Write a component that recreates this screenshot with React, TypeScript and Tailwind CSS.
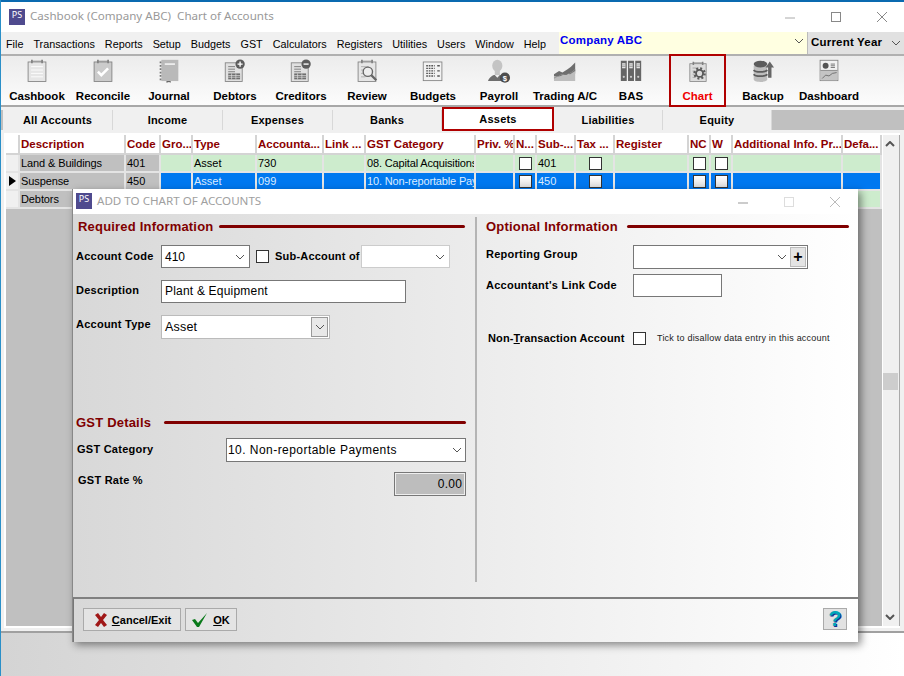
import type { ReactNode } from "react";

const MENU = ["File", "Transactions", "Reports", "Setup", "Budgets", "GST", "Calculators", "Registers", "Utilities", "Users", "Window", "Help"];
const TABS = [
  { name: "All Accounts", width: "w-[110px]" },
  { name: "Income", width: "w-[110px]" },
  { name: "Expenses", width: "w-[110px]" },
  { name: "Banks", width: "w-[109px]" },
  { name: "Assets", width: "w-[112px]" },
  { name: "Liabilities", width: "w-[109px]" },
  { name: "Equity", width: "w-[109px]" },
];
const HEADERS = ["Description", "Code", "Gro...", "Type", "Accounta...", "Link ...", "GST Category", "Priv. %", "N...", "Sub-...", "Tax ...", "Register", "NC", "W", "Additional Info. Pr...", "Defa..."];

const ROWS = [
  { desc: "Land & Buildings", code: "401", type: "Asset", acct: "730", gst: "08. Capital Acquisitions", sub: "401", selected: false },
  { desc: "Suspense", code: "450", type: "Asset", acct: "099", gst: "10. Non-reportable Payments", sub: "450", selected: true },
  { desc: "Debtors", code: "", type: "", acct: "", gst: "", sub: "", selected: false },
];

function Clipboard({ fill = "#e6e6e6", children }: { fill?: string; children?: ReactNode }) {
  return (
    <svg width="28" height="28" viewBox="0 0 28 28">
      <rect x="3.5" y="3.5" width="21" height="23" fill={fill} stroke="#808080" />
      <path d="M7 1h2v4H7zM19 1h2v4h-2zM9 2h10v1H9z" fill="#808080" />
      {children}
    </svg>
  );
}

function DocTable({ sign }: { sign: "plus" | "minus" }) {
  return (
    <svg width="28" height="28" viewBox="0 0 28 28">
      <rect x="2.5" y="4.5" width="20" height="22" fill="#e0e0e0" stroke="#808080" />
      <path d="M6 9h8M6 12h8M6 15h8" stroke="#707070" />
      <rect x="6" y="17" width="14" height="7" fill="#6e6e6e" />
      <path d="M6 19.5h14M6 21.5h14M10 17v7M15 17v7" stroke="#e0e0e0" strokeWidth="0.8" />
      <circle cx="20" cy="6" r="5.5" fill="#5c5c5c" />
      {sign === "plus" ? <path d="M17 6h6M20 3v6" stroke="#fff" strokeWidth="1.6" /> : <path d="M17 6h6" stroke="#fff" strokeWidth="1.6" />}
    </svg>
  );
}

function ToolIcon({ name }: { name: string }) {
  if (name === "Cashbook") {
    return (
      <Clipboard>
        <path d="M7 9h14M7 13h14M7 17h14M7 21h14" stroke="#fff" />
      </Clipboard>
    );
  }
  if (name === "Reconcile") {
    return (
      <Clipboard fill="#cbcbcb">
        <path d="M8 15l4 4 8-8" fill="none" stroke="#fff" strokeWidth="3" />
      </Clipboard>
    );
  }
  if (name === "Journal") {
    return (
      <svg width="28" height="28" viewBox="0 0 28 28">
        <rect x="5" y="1" width="20" height="25" fill="#b9b9b9" />
        <rect x="9" y="5" width="12" height="2" fill="#f0f0f0" />
        <path d="M4 3v22" stroke="#777" strokeDasharray="2 2" strokeWidth="2" />
        <path d="M11 26h5v2l-2-1-3 1z" fill="#666" />
      </svg>
    );
  }
  if (name === "Debtors") return <DocTable sign="plus" />;
  if (name === "Creditors") return <DocTable sign="minus" />;
  if (name === "Review") {
    return (
      <Clipboard>
        <path d="M7 9h9M7 13h4M7 17h3M7 21h5" stroke="#aaa" />
        <circle cx="15" cy="15" r="5.5" fill="#eee" stroke="#666" strokeWidth="1.6" />
        <path d="M19 19l6 6" stroke="#666" strokeWidth="2.6" />
      </Clipboard>
    );
  }
  if (name === "Budgets") {
    return (
      <svg width="28" height="28" viewBox="0 0 28 28">
        <rect x="2.5" y="3.5" width="22" height="22" fill="#f2f2f2" stroke="#808080" />
        <path d="M6 8h10M6 11h10M6 14h10M6 17h10M6 20h10" stroke="#555" strokeWidth="1.6" strokeDasharray="2 1" />
        <path d="M19 8h3M19 14h3M19 20h3" stroke="#555" strokeWidth="1.6" />
      </svg>
    );
  }
  if (name === "Payroll") {
    return (
      <svg width="28" height="28" viewBox="0 0 28 28">
        <ellipse cx="12" cy="8" rx="6" ry="7" fill="#c4c4c4" />
        <rect x="9" y="13" width="6" height="6" fill="#c4c4c4" />
        <path d="M1 26c2-5 6-7 8-7l3 3 3-3c2 0 5 1 6 3v4z" fill="#6e6e6e" />
        <circle cx="21" cy="22" r="6" fill="#4d4d4d" />
        <text x="21" y="25.5" textAnchor="middle" fontSize="9" fontWeight="700" fill="#fff" fontFamily="Liberation Sans, sans-serif">$</text>
      </svg>
    );
  }
  if (name === "Trading A/C") {
    return (
      <svg width="28" height="28" viewBox="0 0 28 28">
        <path d="M1 18l6-4 4 2 6-4 4-3 5-5v13l-6 3-5-1-6 3-4-1-4 2z" fill="#6e6e6e" />
        <path d="M1 20l4 1 5-3 5 1 6-3 5-4v14H1z" fill="#bdbdbd" />
        <path d="M1 22l4-1 5-3 5 1 6-3 5-4v2l-6 4-5-1-6 3-4 1-4 2z" fill="#777" />
      </svg>
    );
  }
  if (name === "BAS") {
    return (
      <svg width="28" height="28" viewBox="0 0 28 28">
        <path d="M2 2h7v24H2zM10.5 2h7v24h-7zM19 2h7v24h-7z" fill="#666" />
        <path d="M3.5 5h4v6h-4zM12 5h4v6h-4zM20.5 5h4v6h-4z" fill="#eee" />
        <path d="M3.5 7h4M3.5 9h4M12 7h4M12 9h4M20.5 7h4M20.5 9h4" stroke="#666" strokeWidth="0.7" />
        <circle cx="5.5" cy="21" r="1.3" fill="#ccc" />
        <circle cx="14" cy="21" r="1.3" fill="#ccc" />
        <circle cx="22.5" cy="21" r="1.3" fill="#ccc" />
      </svg>
    );
  }
  if (name === "Chart") {
    return (
      <Clipboard fill="#dcdcdc">
        <path d="M7 9h8M7 13h4M7 17h3M7 21h4" stroke="#999" />
        <circle cx="16" cy="16" r="6.5" fill="none" stroke="#5a5a5a" strokeWidth="3" strokeDasharray="2.5 2.6" />
        <circle cx="16" cy="16" r="4.5" fill="#dcdcdc" stroke="#5a5a5a" strokeWidth="2.4" />
      </Clipboard>
    );
  }
  if (name === "Backup") {
    return (
      <svg width="28" height="28" viewBox="0 0 28 28">
        <path d="M3 8h16v16c0 2-3 3-8 3s-8-1-8-3z" fill="#bdbdbd" />
        <ellipse cx="11" cy="6" rx="8" ry="4" fill="#5c5c5c" />
        <path d="M3 13c2 3 14 3 16 0M3 18c2 3 14 3 16 0" fill="none" stroke="#5c5c5c" strokeWidth="2" />
        <path d="M22 3l5 7h-3v12h-4V10h-3z" fill="#666" />
      </svg>
    );
  }
  return (
    <svg width="28" height="28" viewBox="0 0 28 28">
      <rect x="3.5" y="1.5" width="21" height="24" fill="#f2f2f2" stroke="#808080" />
      <rect x="4" y="14" width="20" height="11" fill="#c4c4c4" />
      <path d="M4 13.5h20" stroke="#808080" />
      <circle cx="10" cy="8" r="3.5" fill="#555" />
      <path d="M16 6h5M16 8h5M16 10h5" stroke="#666" />
      <path d="M6 23l4-4 4 1 4-3 5-1" fill="none" stroke="#666" />
    </svg>
  );
}

function Logo() {
  return (
    <div className="flex h-[16px] w-[16px] shrink-0 items-start justify-center bg-[#4f4a8e] text-[9px] leading-[12px] text-white">
      PS
    </div>
  );
}

function Chevron({ className = "text-[#555]", width = "1" }: { className?: string; width?: string }) {
  return (
    <svg width="10" height="6" viewBox="0 0 10 6" className={className}>
      <path d="M1 1l4 4 4-4" fill="none" stroke="currentColor" strokeWidth={width} />
    </svg>
  );
}

function WindowButtons({ faded }: { faded?: boolean }) {
  const stroke = faded ? "#bbb" : "#888";
  return (
    <div className="flex items-center">
      <svg width="46" height="12" viewBox="0 0 46 12">
        <path d="M18 7h10" stroke={faded ? "#999" : "#aaa"} />
      </svg>
      <svg width="46" height="12" viewBox="0 0 46 12">
        <rect x="18.5" y="1.5" width="9" height="9" fill="none" stroke={faded ? "#ddd" : stroke} />
      </svg>
      <svg width="46" height="12" viewBox="0 0 46 12">
        <path d="M18 1l10 10M28 1L18 11" stroke={stroke} />
      </svg>
    </div>
  );
}

function Check({ shaded }: { shaded?: boolean }) {
  return (
    <div className={`h-[13px] w-[13px] border border-[#333] ${shaded ? "bg-linear-to-b from-white to-[#ddd]" : "bg-white"}`} />
  );
}

function Cell({ className = "", children }: { className?: string; children?: ReactNode }) {
  return (
    <div className={`flex h-[18px] items-center overflow-hidden whitespace-nowrap border-b-2 border-r-2 border-[#e4e4e4] pl-[1px] ${className}`}>
      {children}
    </div>
  );
}

function Heading({ children, ruleClass }: { children: ReactNode; ruleClass: string }) {
  return (
    <div className="flex items-center">
      <span className="whitespace-nowrap text-[13px] font-bold tracking-[0.2px] text-[#800000]">{children}</span>
      <div className={`h-[3px] rounded-full bg-[#800000] ${ruleClass}`} />
    </div>
  );
}

export default function App() {
  return (
    <div className="relative flex h-[676px] w-[904px] flex-col overflow-hidden border-l border-[#2a8fc8] bg-white font-['Liberation_Sans',sans-serif] text-[11px] text-black">
      <div className="h-[2px] shrink-0 bg-[#0a6ab0]" />

      <div className="flex h-[30px] shrink-0 items-center justify-between pl-[8px]">
        <div className="flex items-center gap-[5px] font-['Noto_Sans',sans-serif] text-[11.6px] text-[#999]">
          <Logo />
          <span className="mb-[2px] whitespace-pre">Cashbook (Company ABC)  Chart of Accounts</span>
        </div>
        <div className="mr-[-1px]">
          <WindowButtons />
        </div>
      </div>

      <div className="flex h-[22px] shrink-0 bg-[#f0f0f0]">
        <div className="flex w-[558px] items-center gap-[10px] pl-[5px] pt-[2px] text-[10.8px]">
          {MENU.map((item) => (
            <span key={item} className="whitespace-nowrap">{item}</span>
          ))}
        </div>
        <div className="flex w-[248px] items-start justify-between bg-[#ffffe1] pl-[1px] pr-[3px]">
          <span className="text-[11.5px] font-bold leading-[17px] tracking-[0.2px] text-[#0000f0]">Company ABC</span>
          <span className="pt-[6px]"><Chevron /></span>
        </div>
        <div className="flex w-[97px] items-center justify-between border-l border-[#bbb] bg-[#e1e1e1] pl-[3px] pr-[3px]">
          <span className="text-[11.5px] font-bold tracking-[0.2px]">Current Year</span>
          <Chevron />
        </div>
      </div>

      <div className="flex h-[53px] shrink-0 border-b-2 border-t-2 border-b-[#a8a8a8] border-t-[#b0b0b0] bg-linear-to-b from-[#ececec] to-[#fcfcfc] pl-[3px]">
        {["Cashbook", "Reconcile", "Journal", "Debtors", "Creditors", "Review", "Budgets", "Payroll", "Trading A/C", "BAS", "Chart", "Backup", "Dashboard"].map((name) => (
          <div
            key={name}
            className={
              name === "Chart"
                ? "mb-[-2px] ml-[5px] mr-[4px] mt-[-2px] flex w-[57px] flex-col items-center border-2 border-[#b00000] pt-[5px]"
                : "flex w-[66px] flex-col items-center pt-[3px]"
            }
          >
            <ToolIcon name={name} />
            <span className={`mt-[5px] whitespace-nowrap text-[11.5px] font-bold ${name === "Chart" ? "text-[#f00000]" : ""}`}>
              {name}
            </span>
          </div>
        ))}
      </div>

      <div className="flex h-[23px] shrink-0 items-end bg-[#f0f0f0]">
        <div className="flex h-[20px] w-full items-stretch bg-[#c0c0c0] pl-[2px]">
          {TABS.map((tab) => (
            <div
              key={tab.name}
              className={
                tab.name === "Assets"
                  ? `relative z-10 mb-[-1px] mt-[-3px] flex ${tab.width} items-start justify-center border-2 border-[#b00000] bg-white pt-[2px] text-[11px] font-bold tracking-[0.2px]`
                  : `flex ${tab.width} items-center justify-center border-r border-[#d8d8d8] bg-[#f0f0f0] pt-[1px] text-[11px] font-bold tracking-[0.2px]`
              }
            >
              {tab.name}
            </div>
          ))}
        </div>
      </div>

      <div className="flex h-[501px] shrink-0 bg-[#f0f0f0] pb-[3px] pl-[3px] pr-[4px] pt-[3px]">
        <div className="flex flex-1 border-2 border-r-0 border-white">
          <div className="flex w-[876px] flex-col bg-[#c0c0c0]">
            <div className="grid grid-cols-[14px_106px_35px_32px_64px_67px_42px_110px_39px_22px_39px_39px_74px_22px_22px_110px_39px] bg-white">
              <div className="h-[20px] border-b-2 border-r-2 border-[#d4d4d4]" />
              {HEADERS.map((header) => (
                <div key={header} className="flex h-[20px] items-center overflow-hidden whitespace-nowrap border-b-2 border-r-2 border-[#d4d4d4] pl-[1px] pt-[1px] text-[11.5px] font-bold text-[#8b0000]">
                  {header}
                </div>
              ))}
              {ROWS.map((row) => {
                const tone = row.selected ? "bg-[#0078f0] text-[#dcecff]" : "bg-[#cdeccd]";
                return [
                  <div key={`${row.desc}-mark`} className="flex h-[18px] items-center justify-center border-b-2 border-r-2 border-[#e4e4e4] bg-[#f0f0f0]">
                    {row.selected && (
                      <svg width="7" height="10" viewBox="0 0 7 10"><path d="M0 0l7 5-7 5z" fill="#000" /></svg>
                    )}
                  </div>,
                  <Cell key={`${row.desc}-desc`} className="bg-[#c0c0c0] tracking-[-0.1px]">{row.desc}</Cell>,
                  <Cell key={`${row.desc}-code`} className="bg-[#c0c0c0]">{row.code}</Cell>,
                  <Cell key={`${row.desc}-group`} className={tone} />,
                  <Cell key={`${row.desc}-type`} className={tone}>{row.type}</Cell>,
                  <Cell key={`${row.desc}-acct`} className={tone}>{row.acct}</Cell>,
                  <Cell key={`${row.desc}-link`} className={tone} />,
                  <Cell key={`${row.desc}-gst`} className={`${tone} tracking-[-0.15px]`}>{row.gst}</Cell>,
                  <Cell key={`${row.desc}-priv`} className={tone} />,
                  <Cell key={`${row.desc}-n`} className={`${tone} justify-center pl-0`}><Check shaded={row.selected} /></Cell>,
                  <Cell key={`${row.desc}-sub`} className={tone}>{row.sub}</Cell>,
                  <Cell key={`${row.desc}-tax`} className={`${tone} justify-center pl-0`}><Check shaded={row.selected} /></Cell>,
                  <Cell key={`${row.desc}-reg`} className={tone} />,
                  <Cell key={`${row.desc}-nc`} className={`${tone} justify-center pl-0`}><Check shaded={row.selected} /></Cell>,
                  <Cell key={`${row.desc}-w`} className={`${tone} justify-center pl-0`}><Check shaded={row.selected} /></Cell>,
                  <Cell key={`${row.desc}-add`} className={tone} />,
                  <Cell key={`${row.desc}-def`} className={tone} />,
                ];
              })}
            </div>
          </div>
          <div className="flex w-[18px] flex-col border-l border-r border-l-white border-r-[#aaa] pb-[6px] pt-[6px]">
            <div className="flex justify-center pr-[2px]"><Chevron className="rotate-180 text-[#555]" width="2" /></div>
            <div className="mt-[226px] h-[17px] w-[15px] bg-[#cdcdcd]" />
            <div className="mt-auto flex justify-center pr-[2px]"><Chevron className="text-[#555]" width="2" /></div>
          </div>
        </div>
      </div>

      <div className="flex-1 border-t-2 border-[#a0a0a0] bg-linear-to-r from-[#d4d4d4] to-white" />

      {/* dialog window */}
      <div className="absolute left-[71px] top-[189px] flex h-[453px] w-[786px] flex-col border-l border-[#888] bg-white shadow-[3px_3px_8px_rgba(0,0,0,0.45)]">
        <div className="flex h-[25px] shrink-0 items-center justify-between bg-white pl-[3px]">
          <div className="flex items-center gap-[5px] font-['Noto_Sans',sans-serif] text-[11.6px] text-[#a0a0a0]">
            <Logo />
            <span className="mb-[2px]">ADD TO CHART OF ACCOUNTS</span>
          </div>
          <WindowButtons faded />
        </div>

        <div className="flex h-[383px] shrink-0 bg-linear-to-r from-[#d8d8d8] to-white pt-[3px]">
          <div className="flex h-[365px] w-[404px] flex-col border-r-2 border-[#b4b4b4] pl-[3px]">
            <div className="pl-[2px]">
              <Heading ruleClass="ml-[6px] w-[246px]">Required Information</Heading>
            </div>
            <div className="mt-[8px] flex h-[24px] items-center">
              <span className="w-[85px] font-bold tracking-[0.25px]">Account Code</span>
              <div className="flex h-[23px] w-[89px] items-center justify-between border border-[#777] bg-white pl-[3px] pr-[4px] text-[12px]">
                410<Chevron />
              </div>
              <div className="ml-[6px] h-[13px] w-[13px] border border-[#333] bg-white" />
              <span className="ml-[6px] w-[86px] whitespace-nowrap font-bold tracking-[0.2px]">Sub-Account of</span>
              <div className="flex h-[23px] w-[89px] items-center justify-end border border-[#ccc] bg-white pr-[4px]">
                <Chevron />
              </div>
            </div>
            <div className="mt-[11px] flex h-[23px] items-start">
              <span className="w-[85px] pt-[2px] font-bold tracking-[0.25px]">Description</span>
              <div className="flex h-[23px] w-[245px] items-center border border-[#777] bg-white pl-[3px] text-[12px] tracking-[0.2px]">
                Plant &amp; Equipment
              </div>
            </div>
            <div className="mt-[12px] flex h-[24px] items-start">
              <span className="w-[85px] pt-[1px] font-bold tracking-[0.25px]">Account Type</span>
              <div className="flex h-[24px] w-[169px] items-center justify-between border border-[#bbb] bg-white pl-[3px] pr-[1px] text-[12.5px] tracking-[0.2px]">
                <span className="pt-[1px]">Asset</span>
                <span className="flex h-[20px] w-[17px] items-center justify-center border border-[#999] bg-[#e8e8e8]"><Chevron /></span>
              </div>
            </div>
            <div className="mt-[74px]">
              <Heading ruleClass="ml-[13px] w-[302px]">GST Details</Heading>
            </div>
            <div className="mt-[6px] flex h-[24px] items-center pl-[1px]">
              <span className="w-[149px] pb-[2px] font-bold tracking-[0.25px]">GST Category</span>
              <div className="flex h-[24px] w-[240px] items-center justify-between border border-[#777] bg-white pl-[1px] pr-[3px] text-[12px] tracking-[0.45px]">
                10. Non-reportable Payments<Chevron />
              </div>
            </div>
            <div className="mt-[10px] flex h-[24px] items-start justify-between pl-[2px] pr-[9px]">
              <span className="font-bold tracking-[0.25px]">GST Rate %</span>
              <div className="flex h-[24px] w-[72px] items-center justify-end border border-[#777] bg-[#bdbdbd] pr-[3px] text-[12px] tracking-[0.2px] shadow-[inset_0_0_0_1px_#eee]">
                0.00
              </div>
            </div>
          </div>

          <div className="flex flex-1 flex-col pl-[9px]">
            <div>
              <Heading ruleClass="ml-[9px] w-[222px]">Optional Information</Heading>
            </div>
            <div className="mt-[8px] flex h-[24px] items-start">
              <span className="w-[147px] pt-[1px] font-bold tracking-[0.25px]">Reporting Group</span>
              <div className="flex h-[24px] w-[175px] items-center justify-end border border-[#777] bg-white pr-[1px]">
                <Chevron />
                <span className="ml-[3px] flex h-[20px] w-[16px] items-center justify-center border border-[#bbb] bg-[#e4e4e4] text-[16px] font-black leading-none">+</span>
              </div>
            </div>
            <div className="mt-[5px] flex h-[23px] items-start">
              <span className="w-[147px] pt-[3px] font-bold tracking-[0.25px]">Accountant's Link Code</span>
              <div className="h-[23px] w-[89px] border border-[#777] bg-white" />
            </div>
            <div className="mt-[35px] flex h-[14px] items-center pl-[2px]">
              <span className="w-[145px] font-bold tracking-[0.13px]">
                Non-<span className="underline">T</span>ransaction Account
              </span>
              <div className="h-[13px] w-[13px] border border-[#333] bg-white" />
              <span className="ml-[11px] whitespace-nowrap text-[9px] tracking-[0.22px] text-[#222]">Tick to disallow data entry in this account</span>
            </div>
          </div>
        </div>

        <div className="flex flex-1 items-start justify-between border-l border-t-2 border-l-[#777] border-t-[#808080] bg-linear-to-r from-[#d8d8d8] to-white pl-[9px] pr-[11px] pt-[9px]">
          <div className="flex gap-[4px]">
            <div className="flex h-[23px] w-[98px] items-center justify-center gap-[3px] border border-[#aaa] bg-[#e4e4e4] pt-[1px] font-bold">
              <svg width="16" height="16" viewBox="0 0 16 16">
                <path d="M2 3l3-2 3 4 3-4 3 2-4 5 4 5-3 2-3-4-3 4-3-2 4-5z" fill="#a01818" />
              </svg>
              <span><span className="underline">C</span>ancel/Exit</span>
            </div>
            <div className="flex h-[23px] w-[52px] items-center justify-center gap-[5px] border border-[#aaa] bg-[#e4e4e4] pt-[1px] font-bold">
              <svg width="16" height="14" viewBox="0 0 16 14">
                <path d="M0 7l3-1 3 4 9-10-8 14h-2z" fill="#0a7a1a" />
              </svg>
              <span><span className="underline">O</span>K</span>
            </div>
          </div>
          <div className="flex h-[22px] w-[24px] items-center justify-center border border-[#aaa] bg-[#e2e2e2] text-[22px] font-bold leading-none text-[#00a6b8] [text-shadow:1px_1px_0_#1a2a90]">
            ?
          </div>
        </div>
      </div>
    </div>
  );
}
